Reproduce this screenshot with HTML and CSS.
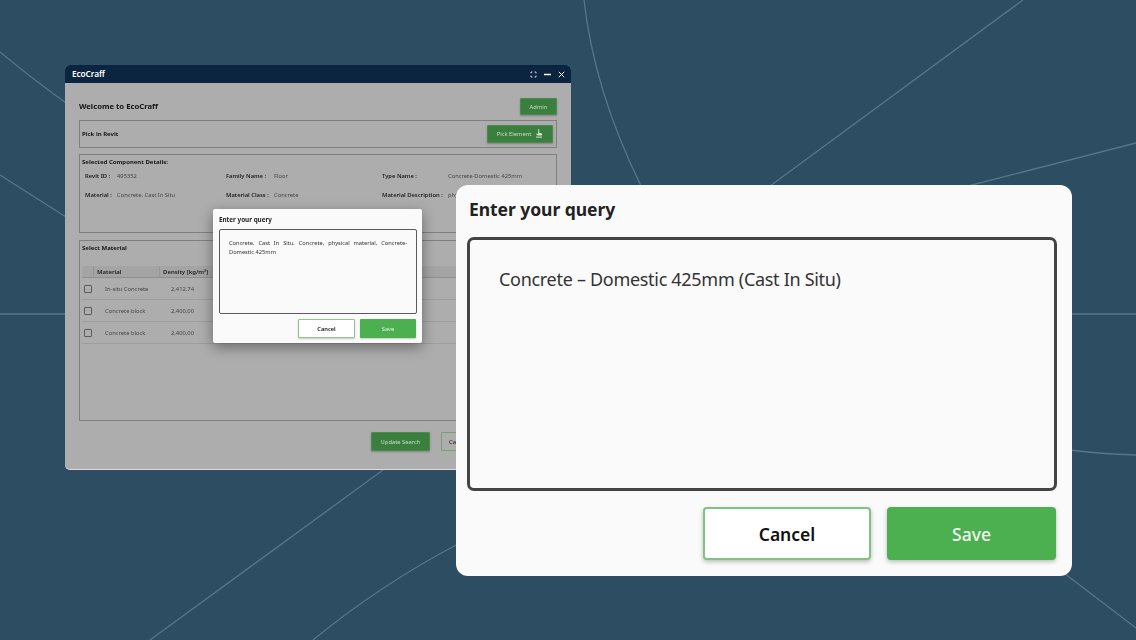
FILE: index.html
```html
<!DOCTYPE html>
<html lang="en">
<head>
    <meta charset="UTF-8">
    <meta name="viewport" content="width=device-width, initial-scale=1.0">
    <title>EcoCraff - Enter your query</title>
    <link rel="stylesheet" href="styles.css">
</head>
<body>

<div class="stage">
    <!-- Background lines -->
    <svg class="bg-lines" viewBox="0 0 1136 640" fill="none">
        <path d="M0 52Q30 77 66 103"/>
        <path d="M0 175L66 217"/>
        <path d="M0 314H66"/>
        <path d="M584 0Q594 90 641 186"/>
        <path d="M1023 0L770 186"/>
        <path d="M1136 143L968 186"/>
        <path d="M383 470L150 640"/>
        <path d="M458 544Q380 585 313 640"/>
        <path d="M1070 450Q1100 454 1136 455"/>
        <path d="M1060 570L1136 628"/>
        <path d="M1070 314H1136"/>
    </svg>

    <!-- App window (dimmed behind the small dialog) -->
    <div class="app-window">
        <div class="title-bar">
            <span class="app-name">EcoCraff</span>
            <div class="window-controls">
                <svg width="7" height="7" viewBox="0 0 7 7" fill="none" stroke="#e4e8ec" stroke-width="0.9">
                    <path d="M1 2.4V1H2.4M4.6 1H6V2.4M6 4.6V6H4.6M2.4 6H1V4.6"/>
                </svg>
                <svg width="7" height="7" viewBox="0 0 7 7" fill="none" stroke="#fff" stroke-width="1.4">
                    <path d="M0 3.5H7"/>
                </svg>
                <svg width="7" height="7" viewBox="0 0 7 7" fill="none" stroke="#fff" stroke-width="1">
                    <path d="M.8.8L6.2 6.2M6.2.8L.8 6.2"/>
                </svg>
            </div>
        </div>

        <div class="app-body">
            <div class="welcome-row">
                <h1>Welcome to EcoCraff</h1>
                <button class="btn-green btn-admin">Admin</button>
            </div>

            <div class="panel panel-pick">
                <span class="panel-title">Pick in Revit</span>
                <button class="btn-green btn-pick">
                    Pick Element
                    <svg width="8" height="10" viewBox="0 0 8 10" fill="#d5e4d5">
                        <path d="M3.2 .6C3.2 .2 4.2 .2 4.2 .6V3.8L6.4 4.3C6.9 4.4 7 4.8 7 5.2V6.6H2.6L1 5.1L1.6 4.6L3.2 5.3Z"/>
                        <rect x="1" y="7.6" width="6" height="1"/>
                    </svg>
                </button>
            </div>

            <div class="panel panel-details">
                <div class="panel-title">Selected Component Details:</div>
                <div class="details-grid">
                    <b>Revit ID :</b><span>495352</span>
                    <b>Family Name :</b><span>Floor</span>
                    <b>Type Name :</b><span>Concrete-Domestic 425mm</span>
                    <b>Material :</b><span>Concrete, Cast In Situ</span>
                    <b>Material Class :</b><span>Concrete</span>
                    <b>Material Description :</b><span>physical material</span>
                </div>
            </div>

            <div class="panel panel-material">
                <div class="panel-title">Select Material</div>
                <div class="table">
                    <div class="table-row table-head">
                        <span></span>
                        <span>Material</span>
                        <span>Density [kg/m³]</span>
                    </div>
                    <div class="table-row">
                        <span><i class="checkbox"></i></span>
                        <span class="cell-material">In-situ Concrete</span>
                        <span class="cell-density">2,412.74</span>
                    </div>
                    <div class="table-row">
                        <span><i class="checkbox"></i></span>
                        <span class="cell-material">Concrete block</span>
                        <span class="cell-density">2,400.00</span>
                    </div>
                    <div class="table-row">
                        <span><i class="checkbox"></i></span>
                        <span class="cell-material">Concrete block</span>
                        <span class="cell-density">2,400.00</span>
                    </div>
                </div>
            </div>

            <div class="app-footer">
                <button class="btn-green btn-update">Update Search</button>
                <button class="btn-outline">Cancel</button>
            </div>
        </div>

        <!-- Small query dialog on the app window -->
        <div class="small-dialog">
            <div class="small-title">Enter your query</div>
            <div class="small-input">Concrete, Cast In Situ, Concrete, physical material, Concrete-Domestic 425mm</div>
            <div class="small-actions">
                <button class="small-cancel">Cancel</button>
                <button class="small-save">Save</button>
            </div>
        </div>
    </div>

    <!-- Enlarged query dialog -->
    <div class="big-dialog">
        <div class="big-title">Enter your query</div>
        <div class="big-input">Concrete – Domestic 425mm (Cast In Situ)</div>
        <div class="big-actions">
            <button class="big-cancel">Cancel</button>
            <button class="big-save">Save</button>
        </div>
    </div>
</div>

</body>
</html>
```

FILE: styles.css
```css
* {
    box-sizing: border-box;
}
body {
    margin: 0;
    font-family: "Noto Sans", "Open Sans", sans-serif;
    background-color: #2c4d62;
    overflow: hidden;
}
button {
    font-family: inherit;
    padding: 0;
    cursor: pointer;
}
.stage {
    position: relative;
    width: 1136px;
    height: 640px;
    overflow: hidden;
}
.bg-lines {
    position: absolute;
    inset: 0;
    width: 1136px;
    height: 640px;
}
.bg-lines path {
    stroke: #587689;
    stroke-width: 1.3;
}

/* App window */
.app-window {
    position: absolute;
    left: 65px;
    top: 65px;
    width: 506px;
    height: 405px;
    border-radius: 5px;
    overflow: hidden;
    background-color: #adadad;
    border-bottom: 1px solid #dcdcdc;
}
.title-bar {
    display: flex;
    justify-content: space-between;
    align-items: center;
    height: 18px;
    padding: 0 6px 0 7px;
    background-color: #0b2440;
}
.app-name {
    margin-bottom: 2px;
    color: #fff;
    font-size: 8.3px;
    font-weight: 600;
    letter-spacing: -0.1px;
}
.window-controls {
    display: flex;
    align-items: center;
    gap: 7px;
}
.app-body {
    display: flex;
    flex-direction: column;
    padding: 15px 14px 0;
    filter: blur(0.3px);
}
.welcome-row {
    display: flex;
    justify-content: space-between;
    align-items: center;
    height: 17px;
    margin-bottom: 5px;
}
.welcome-row h1 {
    margin: 0 0 2px;
    font-size: 7.7px;
    font-weight: 700;
    color: #141414;
}
.btn-green {
    border: 1px solid #4c8a4f;
    border-radius: 1px;
    background-color: #3a7f3e;
    color: #c9dcc9;
    font-size: 5.8px;
    box-shadow: 0 1px 2px rgba(0, 0, 0, 0.25);
}
.btn-admin {
    width: 37px;
    height: 17px;
}
.panel {
    border: 1px solid #808080;
    padding: 0 2px;
}
.panel-title {
    font-size: 6px;
    font-weight: 700;
    color: #161616;
}
.panel-pick {
    display: flex;
    justify-content: space-between;
    align-items: center;
    height: 28px;
    margin-bottom: 6px;
    padding-right: 3px;
}
.btn-pick {
    display: flex;
    align-items: center;
    justify-content: center;
    gap: 4px;
    width: 66px;
    height: 18px;
}
.panel-details {
    height: 79px;
    margin-bottom: 7px;
    padding-top: 3px;
}
.details-grid {
    display: grid;
    grid-template-columns: 32px 109px 48px 108px 66px 1fr;
    grid-auto-rows: 19px;
    align-items: center;
    margin: 0 0 0 3px;
    font-size: 5.8px;
    color: #454545;
}
.details-grid b {
    font-weight: 600;
    color: #202020;
    white-space: nowrap;
}
.details-grid span {
    white-space: nowrap;
}
.panel-material {
    height: 181px;
    padding-top: 3px;
}
.table {
    margin-top: 14px;
    font-size: 5.8px;
    color: #454545;
}
.table-row {
    display: grid;
    grid-template-columns: 11px 66px 1fr;
    align-items: center;
    height: 22px;
    border-bottom: 1px solid #9d9d9d;
}
.table-head {
    height: 12px;
    background-color: #a4a4a4;
    border-bottom: 1px solid #8f8f8f;
    color: #202020;
    font-weight: 600;
    font-size: 6px;
}
.table-head span {
    display: flex;
    align-items: center;
    height: 100%;
    padding-left: 3px;
    border-left: 1px solid #979797;
}
.table-head span:first-child {
    border-left: none;
}
.checkbox {
    display: block;
    width: 8px;
    height: 8px;
    margin-left: 2px;
    border: 1px solid #5c5c5c;
    border-radius: 1px;
}
.cell-material {
    padding-left: 12px;
}
.cell-density {
    padding-left: 12px;
}
.app-footer {
    display: flex;
    justify-content: flex-end;
    gap: 11px;
    margin-top: 11px;
    padding-right: 82px;
}
.btn-update {
    width: 59px;
    height: 19px;
}
.btn-outline {
    width: 34px;
    height: 19px;
    border: 1px solid #76a078;
    border-radius: 1px;
    background-color: #adadad;
    color: #111;
    font-size: 5.8px;
}

/* Small dialog */
.small-dialog {
    position: absolute;
    left: 148px;
    top: 144px;
    width: 209px;
    height: 134px;
    padding: 6px 5px 0 6px;
    border-radius: 2px;
    background-color: #fafafa;
    box-shadow: 0 4px 14px rgba(0, 0, 0, 0.4);
    filter: blur(0.25px);
}
.small-title {
    height: 14px;
    font-size: 6.3px;
    font-weight: 700;
    color: #222;
}
.small-input {
    height: 85px;
    padding: 9px 9px 0;
    border: 1px solid #5a5a5a;
    border-radius: 2px;
    font-size: 5.7px;
    line-height: 9px;
    color: #333;
    text-align: justify;
}
.small-actions {
    display: flex;
    justify-content: flex-end;
    gap: 5px;
    margin-top: 5px;
    padding-right: 1px;
}
.small-cancel, .small-save {
    width: 57px;
    height: 19px;
    border-radius: 1px;
    font-size: 5.7px;
}
.small-cancel {
    border: 1px solid #8fc592;
    background-color: #fff;
    color: #111;
    font-weight: 600;
    box-shadow: 0 1px 2px rgba(0, 0, 0, 0.2);
}
.small-save {
    width: 56px;
    border: none;
    background-color: #4caf50;
    color: #e8f5e8;
    box-shadow: 0 1px 2px rgba(0, 0, 0, 0.2);
}

/* Big dialog */
.big-dialog {
    position: absolute;
    left: 456px;
    top: 185px;
    width: 616px;
    height: 391px;
    padding: 12px 15px 0 11px;
    border-radius: 12px;
    background-color: #fafafa;
}
.big-title {
    height: 40px;
    padding-left: 2px;
    font-size: 17.5px;
    font-weight: 700;
    line-height: 25px;
    letter-spacing: -0.05px;
    color: #222;
}
.big-input {
    height: 254px;
    padding: 26px 29px 0;
    border: 3px solid #444;
    border-radius: 7px;
    font-size: 18px;
    line-height: 26px;
    letter-spacing: -0.3px;
    color: #333;
}
.big-actions {
    display: flex;
    justify-content: flex-end;
    gap: 16px;
    margin-top: 16px;
    padding-right: 1px;
}
.big-cancel, .big-save {
    width: 168px;
    height: 53px;
    border-radius: 4px;
    font-size: 17.5px;
    box-shadow: 0 2px 4px rgba(0, 0, 0, 0.25);
}
.big-cancel {
    border: 2px solid #7fc283;
    background-color: #fff;
    color: #111;
    font-weight: 600;
}
.big-save {
    width: 169px;
    border: none;
    background-color: #4caf50;
    color: #f1f8f1;
    font-weight: 500;
}
```
